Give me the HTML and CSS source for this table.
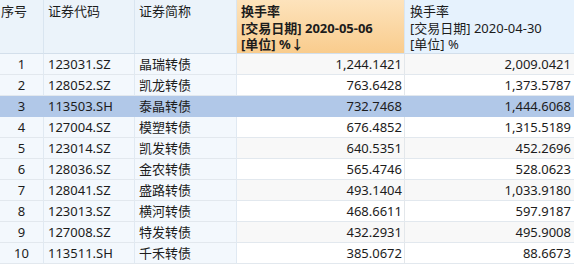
FILE: index.html
```html
<!DOCTYPE html>
<html lang="zh-CN">
<head>
    <meta charset="UTF-8">
    <meta name="viewport" content="width=device-width, initial-scale=1.0">
    <title>换手率排行</title>
    <link rel="stylesheet" href="styles.css">
</head>
<body>
    <div class="grid">
        <!-- header -->
        <div class="hd hd-no">序号</div>
        <div class="hd">证券代码</div>
        <div class="hd">证券简称</div>
        <div class="hd hd-sorted">换手率<br>[交易日期] 2020-05-06<br>[单位] %↓</div>
        <div class="hd hd-alt">换手率<br>[交易日期] 2020-04-30<br>[单位] %</div>

        <div class="row odd">
            <div class="c no">1</div><div class="c">123031.SZ</div><div class="c">晶瑞转债</div>
            <div class="c num">1,244.1421</div><div class="c num last">2,009.0421</div>
        </div>
        <div class="row">
            <div class="c no">2</div><div class="c">128052.SZ</div><div class="c">凯龙转债</div>
            <div class="c num">763.6428</div><div class="c num last">1,373.5787</div>
        </div>
        <div class="row odd selected">
            <div class="c no">3</div><div class="c">113503.SH</div><div class="c">泰晶转债</div>
            <div class="c num">732.7468</div><div class="c num last">1,444.6068</div>
        </div>
        <div class="row">
            <div class="c no">4</div><div class="c">127004.SZ</div><div class="c">模塑转债</div>
            <div class="c num">676.4852</div><div class="c num last">1,315.5189</div>
        </div>
        <div class="row odd">
            <div class="c no">5</div><div class="c">123014.SZ</div><div class="c">凯发转债</div>
            <div class="c num">640.5351</div><div class="c num last">452.2696</div>
        </div>
        <div class="row">
            <div class="c no">6</div><div class="c">128036.SZ</div><div class="c">金农转债</div>
            <div class="c num">565.4746</div><div class="c num last">528.0623</div>
        </div>
        <div class="row odd">
            <div class="c no">7</div><div class="c">128041.SZ</div><div class="c">盛路转债</div>
            <div class="c num">493.1404</div><div class="c num last">1,033.9180</div>
        </div>
        <div class="row">
            <div class="c no">8</div><div class="c">123013.SZ</div><div class="c">横河转债</div>
            <div class="c num">468.6611</div><div class="c num last">597.9187</div>
        </div>
        <div class="row odd">
            <div class="c no">9</div><div class="c">127008.SZ</div><div class="c">特发转债</div>
            <div class="c num">432.2931</div><div class="c num last">495.9008</div>
        </div>
        <div class="row">
            <div class="c no">10</div><div class="c">113511.SH</div><div class="c">千禾转债</div>
            <div class="c num">385.0672</div><div class="c num last">88.6673</div>
        </div>
    </div>
</body>
</html>
```

FILE: styles.css
```css
* {
    margin: 0;
    padding: 0;
    box-sizing: border-box;
}

body {
    font-family: 'Noto Sans', 'Noto Sans CJK SC', sans-serif;
    font-size: 13px;
    color: #1c1c1c;
    background: white;
    width: 574px;
    height: 264px;
    overflow: hidden;
}

.grid {
    display: grid;
    grid-template-columns: 44px 91px 102px 168px 170px;
    grid-template-rows: 54px;
    grid-auto-rows: 21px;
    width: 575px;
}

.hd {
    background: #ebf3fa;
    border-right: 1px solid #d9e5f0;
    border-bottom: 1px solid #d3dfeb;
    padding: 3px 4px 0;
    line-height: 16.5px;
    white-space: nowrap;
    overflow: hidden;
}

.hd-no {
    padding-left: 1px;
}

.hd-sorted {
    background: linear-gradient(#fde3bc, #f9cc8d);
    font-weight: bold;
    padding-left: 4px;
}

.hd-alt {
    background: #e6f2fd;
    padding-left: 5px;
}

.row {
    display: contents;
}

.c {
    background: #f3f8fd;
    border-right: 1px solid #e0e9f2;
    border-bottom: 1px solid #e2e8ee;
    padding: 0 4px;
    line-height: 20px;
    white-space: nowrap;
    overflow: hidden;
}

.c.no {
    text-align: center;
    padding: 0;
}

.c.num {
    background: white;
    border-right-color: #e3e7eb;
    text-align: right;
    padding-right: 2px;
}

.c.last {
    padding-right: 3px;
}

.odd .c.num {
    background: #f8f8f8;
}

.selected .c,
.selected .c.num {
    background: #b1c8e8;
    border-bottom-color: #b1c8e8;
    border-right-color: #b1c8e8;
}
```
